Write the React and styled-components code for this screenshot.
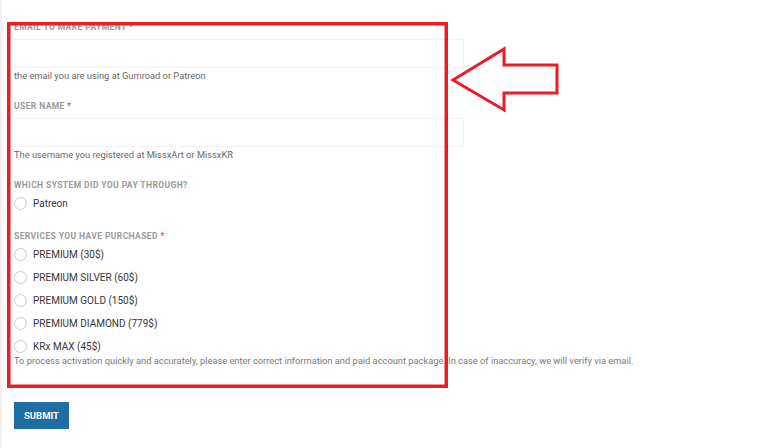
import React from "react";
import styled, { createGlobalStyle } from "styled-components";

const Global = createGlobalStyle`
  html, body { margin: 0; padding: 0; background: #fff; }
  body { font-family: Roboto, "Liberation Sans", Arial, sans-serif; }
  * { box-sizing: border-box; }
`;

const Page = styled.div`
  position: relative;
  width: 768px;
  height: 448px;
  overflow: hidden;
  background: #fff;
  border-left: 2px solid #f1f1f1;
`;

const Form = styled.form`
  display: flex;
  flex-direction: column;
  padding: 20px 0 0 12px;
`;

const Field = styled.div`
  display: flex;
  flex-direction: column;
  margin-bottom: ${(p) => p.$mb ?? 16}px;
`;

const Label = styled.div`
  font-size: 8.5px;
  line-height: 14px;
  font-weight: 700;
  letter-spacing: 0.4px;
  text-transform: uppercase;
  color: #9a9a9a;
  margin-bottom: ${(p) => p.$mb ?? 5}px;
`;

const Req = styled.span`
  color: #e4505a;
`;

const Input = styled.input`
  width: 450px;
  height: 29px;
  border: 1px dotted #e6e6e6;
  background: #fff;
  outline: none;
  padding: 0 8px;
`;

const Help = styled.div`
  font-size: 9.3px;
  line-height: 14px;
  color: #6a6a6a;
  margin-top: 1px;
`;

const Options = styled.div`
  display: flex;
  flex-direction: column;
  gap: 9px;
`;

const Option = styled.label`
  display: flex;
  align-items: center;
  height: 14px;
  gap: 6px;
  font-size: 10px;
  color: #363636;
`;

const Circle = styled.span`
  width: 13px;
  height: 13px;
  border-radius: 50%;
  border: 1px solid #cbcbcb;
  background: #fff;
  flex: none;
`;

const Note = styled.div`
  font-size: 9.3px;
  line-height: 14px;
  color: #7a7a7a;
  margin-top: 1px;
`;

const Submit = styled.button`
  align-self: flex-start;
  margin-top: 34px;
  width: 55px;
  height: 27px;
  flex: none;
  border: none;
  background: #1c6ea4;
  color: #fff;
  font-family: Roboto, "Liberation Sans", Arial, sans-serif;
  font-size: 9.5px;
  font-weight: 700;
  padding: 0;
`;

const Overlay = styled.svg`
  position: absolute;
  left: 0;
  top: 0;
  pointer-events: none;
`;

const services = [
  "PREMIUM (30$)",
  "PREMIUM SILVER (60$)",
  "PREMIUM GOLD (150$)",
  "PREMIUM DIAMOND (779$)",
  "KRx MAX (45$)",
];

export default function App() {
  return (
    <>
      <Global />
      <Page>
        <Form onSubmit={(e) => e.preventDefault()}>
          <Field>
            <Label>
              Email to make payment <Req>*</Req>
            </Label>
            <Input type="email" />
            <Help>the email you are using at Gumroad or Patreon</Help>
          </Field>
          <Field>
            <Label>
              User name <Req>*</Req>
            </Label>
            <Input type="text" />
            <Help>The username you registered at MissxArt or MissxKR</Help>
          </Field>
          <Field $mb={19}>
            <Label $mb={4}>Which system did you pay through?</Label>
            <Options>
              <Option>
                <Circle />
                Patreon
              </Option>
            </Options>
          </Field>
          <Field $mb={0}>
            <Label $mb={4}>
              Services you have purchased <Req>*</Req>
            </Label>
            <Options>
              {services.map((s) => (
                <Option key={s}>
                  <Circle />
                  {s}
                </Option>
              ))}
            </Options>
            <Note>
              To process activation quickly and accurately, please enter correct information and paid account package. In case of inaccuracy, we will verify via email.
            </Note>
          </Field>
          <Submit type="submit">SUBMIT</Submit>
        </Form>
        <Overlay width="768" height="448" viewBox="0 0 768 448">
          <rect x="6.75" y="23.75" width="437.5" height="362.5" fill="none" stroke="#ec1c24" strokeWidth="3.5" />
          <polygon
            points="451,80 502,49 502,65 555,65 555,93 502,93 502,110"
            fill="none"
            stroke="#ec1c24"
            strokeWidth="3"
            strokeLinejoin="miter"
          />
        </Overlay>
      </Page>
    </>
  );
}
